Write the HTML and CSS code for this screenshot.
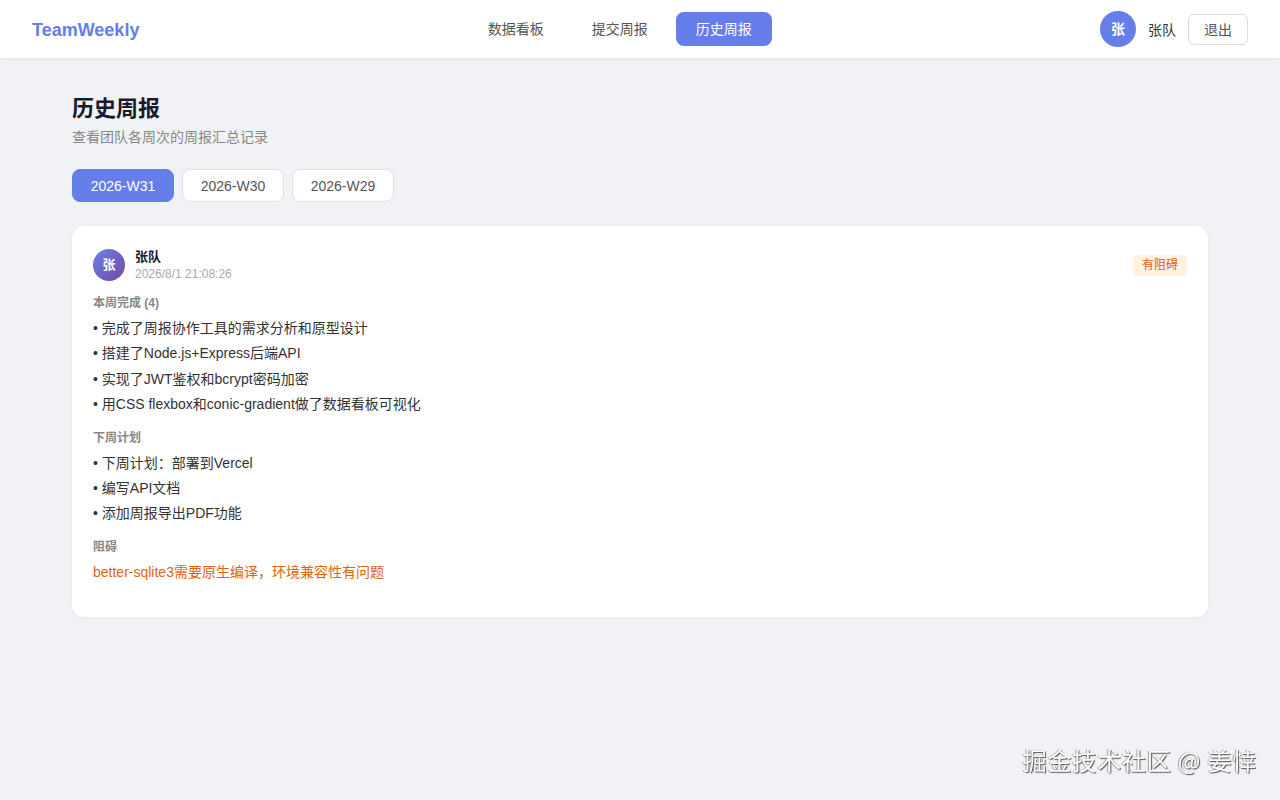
FILE: index.html
```html
<!DOCTYPE html>
<html>
<head>
	<meta charset="UTF-8">
	<title>TeamWeekly - 历史周报</title>
	<link rel="stylesheet" href="styles.css">
</head>
<body>
	<div class="header">
		<div class="logo">TeamWeekly</div>
		<div class="nav">
			<a class="navItem">数据看板</a>
			<a class="navItem">提交周报</a>
			<a class="navItem active">历史周报</a>
		</div>
		<div class="user">
			<div class="avatar">张</div>
			<span class="userName">张队</span>
			<button class="logout">退出</button>
		</div>
	</div>
	<div class="container">
		<div class="pageTitle">历史周报</div>
		<div class="pageDesc">查看团队各周次的周报汇总记录</div>
		<div class="weekTabs">
			<button class="weekTab active">2026-W31</button>
			<button class="weekTab">2026-W30</button>
			<button class="weekTab">2026-W29</button>
		</div>
		<div class="reportCard">
			<div class="cardHead">
				<div class="cardAvatar">张</div>
				<div class="cardWho">
					<div class="cardName">张队</div>
					<div class="cardTime">2026/8/1 21:08:26</div>
				</div>
				<span class="badge">有阻碍</span>
			</div>
			<div class="section">
				<div class="sectionLabel">本周完成 (4)</div>
				<ul class="items">
					<li>完成了周报协作工具的需求分析和原型设计</li>
					<li>搭建了Node.js+Express后端API</li>
					<li>实现了JWT鉴权和bcrypt密码加密</li>
					<li>用CSS flexbox和conic-gradient做了数据看板可视化</li>
				</ul>
			</div>
			<div class="section">
				<div class="sectionLabel">下周计划</div>
				<ul class="items">
					<li>下周计划：部署到Vercel</li>
					<li>编写API文档</li>
					<li>添加周报导出PDF功能</li>
				</ul>
			</div>
			<div class="section">
				<div class="sectionLabel">阻碍</div>
				<div class="blocker">better-sqlite3需要原生编译，环境兼容性有问题</div>
			</div>
		</div>
	</div>
	<div class="watermark">掘金技术社区 @ 姜悻</div>
</body>
</html>
```

FILE: styles.css
```css
body {
	margin: 0;
	padding: 0;
	background-color: #f0f2f5;
	font-family: "Liberation Sans", "Noto Sans CJK SC", sans-serif;
	color: #333;
	font-size: 14px;
}
.header {
	display: flex;
	align-items: center;
	justify-content: space-between;
	height: 58px;
	padding: 0 32px;
	background-color: #fff;
	border-bottom: 1px solid #e6e8eb;
	box-shadow: 0 1px 4px rgba(0, 0, 0, 0.03);
}
.logo {
	font-size: 18px;
	font-weight: bold;
	color: #667eea;
	padding-top: 3px;
}
.nav {
	display: flex;
	gap: 8px;
}
.navItem {
	display: block;
	width: 96px;
	height: 34px;
	line-height: 34px;
	text-align: center;
	border-radius: 8px;
	color: #555;
	font-size: 14px;
	cursor: pointer;
}
.navItem.active {
	background-color: #667eea;
	color: #fff;
}
.user {
	display: flex;
	align-items: center;
}
.avatar {
	width: 36px;
	height: 36px;
	line-height: 36px;
	border-radius: 50%;
	background-color: #667eea;
	color: #fff;
	text-align: center;
	font-weight: bold;
	font-size: 14px;
}
.userName {
	margin: 0 12px;
	color: #333;
}
.logout {
	width: 60px;
	height: 31px;
	border: 1px solid #ddd;
	border-radius: 6px;
	background-color: #fff;
	color: #555;
	font-family: inherit;
	font-size: 14px;
	padding: 0;
}
.container {
	max-width: 1136px;
	margin: 0 auto;
	padding: 35px 32px;
}
.pageTitle {
	font-size: 22px;
	font-weight: bold;
	color: #1a1a2e;
	line-height: 30px;
}
.pageDesc {
	margin-top: 3px;
	font-size: 14px;
	color: #888;
	line-height: 20px;
}
.weekTabs {
	display: flex;
	gap: 8px;
	margin-top: 22px;
}
.weekTab {
	width: 102px;
	height: 33px;
	border: 1px solid #e0e0e0;
	border-radius: 8px;
	background-color: #fff;
	color: #555;
	font-family: inherit;
	font-size: 14px;
	padding: 0;
}
.weekTab.active {
	background-color: #667eea;
	border-color: #667eea;
	color: #fff;
}
.reportCard {
	margin-top: 24px;
	background-color: #fff;
	border-radius: 12px;
	box-shadow: 0 1px 4px rgba(0, 0, 0, 0.05);
	padding: 22px 21px 20px;
}
.cardHead {
	display: flex;
	align-items: center;
	margin-bottom: 12px;
}
.cardAvatar {
	width: 32px;
	height: 32px;
	line-height: 32px;
	border-radius: 50%;
	background: linear-gradient(135deg, #667eea, #764ba2);
	color: #fff;
	text-align: center;
	font-weight: bold;
	font-size: 13px;
}
.cardWho {
	flex: 1;
	margin-left: 10px;
}
.cardName {
	font-weight: bold;
	font-size: 13px;
	color: #1a1a2e;
	line-height: 18px;
}
.cardTime {
	font-size: 12px;
	color: #aaa;
	line-height: 16px;
}
.badge {
	background-color: #fff3e0;
	color: #e0620d;
	font-size: 12px;
	line-height: 17px;
	padding: 2px 9px;
	border-radius: 4px;
}
.section {
	margin-bottom: 14px;
}
.sectionLabel {
	font-size: 12px;
	font-weight: bold;
	color: #888;
	line-height: 18px;
	margin-bottom: 5px;
}
.items {
	list-style: none;
	margin: 0;
	padding: 0;
}
.items li {
	line-height: 22px;
	margin-bottom: 3.3px;
	color: #333;
}
.items li::before {
	content: "• ";
}
.blocker {
	color: #de6410;
	line-height: 22px;
	margin-bottom: 14px;
}
.watermark {
	position: fixed;
	right: 23px;
	bottom: 23px;
	font-size: 24px;
	color: #fff;
	text-shadow: 1px 1px 1px #555, -1px 0 1px #999;
	font-family: "Noto Sans CJK SC", sans-serif;
	letter-spacing: 0.8px;
}
```
